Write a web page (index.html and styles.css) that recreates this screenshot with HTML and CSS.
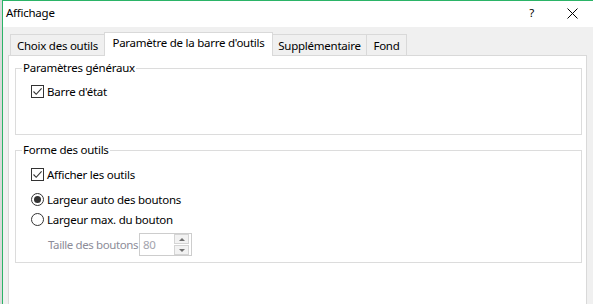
FILE: index.html
```html
<!DOCTYPE html>
<html lang="fr">
<head>
    <meta charset="UTF-8">
    <meta name="viewport" content="width=device-width, initial-scale=1.0">
    <title>Affichage</title>
    <link rel="stylesheet" href="styles.css">
</head>
<body>
    <div class="window">
        <div class="titlebar">
            <span class="title">Affichage</span>
            <span class="help">?</span>
            <svg class="close" width="11" height="11" viewBox="0 0 11 11">
                <path d="M0.5 0.5 L10.5 10.5 M10.5 0.5 L0.5 10.5" stroke="#000" stroke-width="1" fill="none"/>
            </svg>
        </div>

        <div class="client">
            <div class="tabs">
                <div class="tab tab-choix">Choix des outils</div>
                <div class="tab tab-barre active">Paramètre de la barre d'outils</div>
                <div class="tab tab-supp">Supplémentaire</div>
                <div class="tab tab-fond">Fond</div>
            </div>

            <div class="panel">
                <fieldset class="group group-general">
                    <legend>Paramètres généraux</legend>
                    <div class="group-body">
                        <div class="option">
                            <span class="checkbox">
                                <svg width="11" height="11" viewBox="0 0 11 11"><path d="M1.5 5.5 L4.2 8.3 L9.6 2.4" stroke="#333" stroke-width="1.1" fill="none"/></svg>
                            </span>
                            <span>Barre d'état</span>
                        </div>
                    </div>
                </fieldset>

                <fieldset class="group group-shape">
                    <legend>Forme des outils</legend>
                    <div class="group-body">
                        <div class="option">
                            <span class="checkbox">
                                <svg width="11" height="11" viewBox="0 0 11 11"><path d="M1.5 5.5 L4.2 8.3 L9.6 2.4" stroke="#333" stroke-width="1.1" fill="none"/></svg>
                            </span>
                            <span>Afficher les outils</span>
                        </div>
                        <div class="option radio-first">
                            <span class="radio checked"></span>
                            <span>Largeur auto des boutons</span>
                        </div>
                        <div class="option radio-second">
                            <span class="radio"></span>
                            <span>Largeur max. du bouton</span>
                        </div>
                        <div class="size-row">
                            <span class="size-label">Taille des boutons</span>
                            <div class="spin">
                                <span class="spin-value">80</span>
                                <div class="spin-buttons">
                                    <span class="spin-btn"><i class="arrow-up"></i></span>
                                    <span class="spin-btn"><i class="arrow-down"></i></span>
                                </div>
                            </div>
                        </div>
                    </div>
                </fieldset>
            </div>
        </div>
    </div>
</body>
</html>
```

FILE: styles.css
```css
* {
    box-sizing: border-box;
}
body {
    margin: 0;
    width: 593px;
    height: 304px;
    overflow: hidden;
    background-color: #dadada;
    font-family: "Noto Sans", sans-serif;
    font-size: 11.5px;
    letter-spacing: -0.25px;
    color: #000;
}
.window {
    margin-left: 2px;
    height: 304px;
    border-top: 1px solid #2bb467;
    border-left: 1px solid #2bb467;
    background-color: #f0f0f0;
}
.titlebar {
    height: 26px;
    background-color: #fff;
    display: flex;
    align-items: center;
    padding: 0 0 3px 3px;
}
.help {
    margin-left: auto;
    margin-right: 33px;
}
.close {
    margin-right: 15px;
    margin-top: 2px;
}
.client {
    padding: 5px 6px 0 5px;
}
.tabs {
    display: flex;
    align-items: flex-end;
    height: 23px;
    margin-left: 2px;
    position: relative;
    z-index: 1;
}
.tab {
    height: 21px;
    border-top: 1px solid #d9d9d9;
    border-right: 1px solid #d9d9d9;
    background-color: #f0f0f0;
    display: flex;
    align-items: center;
    justify-content: center;
    white-space: nowrap;
}
.tab-choix {
    width: 95px;
    border-left: 1px solid #d9d9d9;
}
.tab-barre {
    width: 169px;
}
.tab-supp {
    width: 94px;
}
.tab-fond {
    width: 40px;
}
.tab.active {
    height: 24px;
    margin-left: -1px;
    margin-bottom: -1px;
    padding-bottom: 4px;
    border-left: 1px solid #d9d9d9;
    background-color: #fff;
}
.panel {
    height: 260px;
    background-color: #fff;
    border: 1px solid #d9d9d9;
    padding: 4px 4px 0 6px;
}
.group {
    margin: 0;
    padding: 0;
    min-width: 0;
    border: 1px solid #dcdcdc;
}
.group legend {
    margin-left: 6px;
    padding: 0 1px;
    line-height: 16px;
}
.group-general .group-body {
    height: 58px;
    padding: 7px 0 0 15px;
}
.group-shape {
    margin-top: 7px;
}
.group-shape .group-body {
    padding: 8px 0 6px 15px;
}
.option {
    display: flex;
    align-items: center;
    height: 17px;
}
.radio-first {
    margin-top: 8px;
}
.radio-second {
    margin-top: 3px;
}
.checkbox {
    width: 13px;
    height: 13px;
    border: 1px solid #333;
    background-color: #fff;
    margin-right: 3px;
    display: flex;
    align-items: center;
    justify-content: center;
}
.radio {
    width: 13px;
    height: 13px;
    border: 1px solid #333;
    border-radius: 50%;
    margin-right: 3px;
    display: flex;
    align-items: center;
    justify-content: center;
}
.radio.checked::after {
    content: "";
    width: 7px;
    height: 7px;
    border-radius: 50%;
    background-color: #333;
}
.size-row {
    display: flex;
    align-items: center;
    margin-top: 5px;
    padding-left: 17px;
}
.size-label {
    flex-shrink: 0;
    margin-right: 1px;
    color: #8c8c98;
    letter-spacing: -0.4px;
    white-space: nowrap;
}
.spin {
    width: 53px;
    height: 23px;
    border: 1px solid #cdcdcd;
    display: flex;
    align-items: center;
    padding: 0 2px 0 3px;
    color: #a3a3ad;
}
.spin-buttons {
    margin-left: auto;
    display: flex;
    flex-direction: column;
    gap: 1px;
}
.spin-btn {
    width: 15px;
    height: 10px;
    border: 1px solid #d4d4d4;
    background-color: #f2f2f2;
    display: flex;
    align-items: center;
    justify-content: center;
}
.arrow-up {
    border-left: 3px solid transparent;
    border-right: 3px solid transparent;
    border-bottom: 3px solid #6f6f6f;
}
.arrow-down {
    border-left: 3px solid transparent;
    border-right: 3px solid transparent;
    border-top: 3px solid #6f6f6f;
}
```
